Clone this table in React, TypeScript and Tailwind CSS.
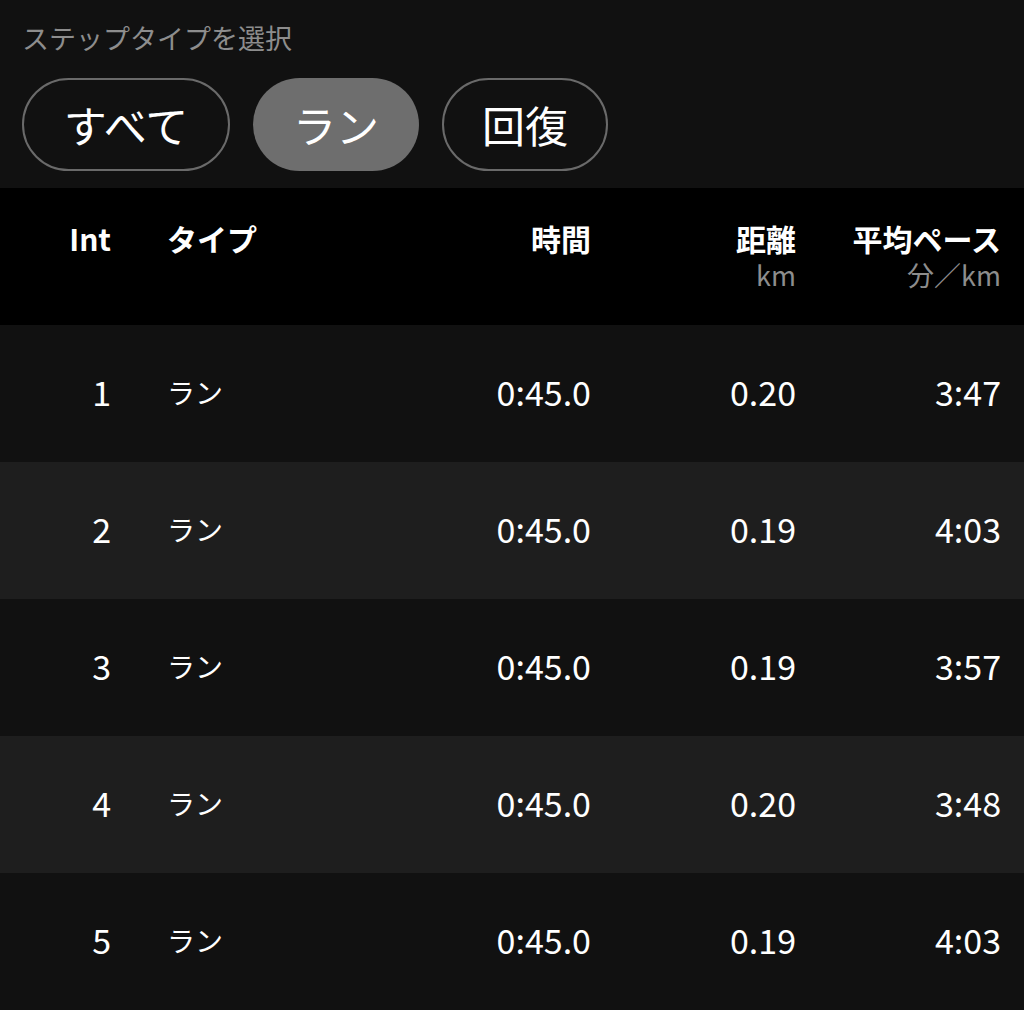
const rows = [
  { n: 1, time: "0:45.0", dist: "0.20", pace: "3:47" },
  { n: 2, time: "0:45.0", dist: "0.19", pace: "4:03" },
  { n: 3, time: "0:45.0", dist: "0.19", pace: "3:57" },
  { n: 4, time: "0:45.0", dist: "0.20", pace: "3:48" },
  { n: 5, time: "0:45.0", dist: "0.19", pace: "4:03" },
];

const font = { fontFamily: '"Noto Sans CJK JP", sans-serif' };

export default function App() {
  return (
    <div className="w-[1024px] h-[1010px] overflow-hidden bg-[#111111] text-white" style={font}>
      {/* step type selector */}
      <div className="h-[188px] px-[22px] pt-[20px]">
        <div className="text-[27px] leading-[36px] text-[#8d8d8d]">ステップタイプを選択</div>
        <div className="mt-[22px] flex gap-[23px]">
          <button className="h-[93px] w-[208px] rounded-full border-2 border-[#6a6a6a] text-[43px] leading-none text-white">
            すべて
          </button>
          <button className="h-[93px] w-[166px] rounded-full bg-[#6e6e6e] text-[43px] leading-none text-white">
            ラン
          </button>
          <button className="h-[93px] w-[166px] rounded-full border-2 border-[#6a6a6a] text-[43px] leading-none text-white">
            回復
          </button>
        </div>
      </div>

      {/* table header */}
      <div className="flex h-[137px] bg-black pr-[23px] pt-[31px] font-bold text-[30px] leading-[38px]">
        <div className="w-[111px] text-right">Int</div>
        <div className="flex-1 pl-[56px]">タイプ</div>
        <div className="w-[200px] text-right">時間</div>
        <div className="w-[205px] text-right">
          <div>距離</div>
          <div className="mt-[1px] font-normal text-[27px] leading-[34px] text-[#8d8d8d]">km</div>
        </div>
        <div className="w-[205px] text-right">
          <div>平均ペース</div>
          <div className="mt-[1px] font-normal text-[27px] leading-[34px] text-[#8d8d8d]">分／km</div>
        </div>
      </div>

      {/* rows */}
      {rows.map((r, i) => (
        <div
          key={r.n}
          className={`flex h-[137px] items-center pr-[23px] pb-[4px] ${i % 2 === 0 ? "bg-[#111111]" : "bg-[#1e1e1e]"}`}
        >
          <div className="w-[111px] text-right text-[34px]">{r.n}</div>
          <div className="flex-1 pl-[56px] text-[28px]">ラン</div>
          <div className="w-[200px] text-right text-[34px]">{r.time}</div>
          <div className="w-[205px] text-right text-[34px]">{r.dist}</div>
          <div className="w-[205px] text-right text-[34px]">{r.pace}</div>
        </div>
      ))}
    </div>
  );
}
